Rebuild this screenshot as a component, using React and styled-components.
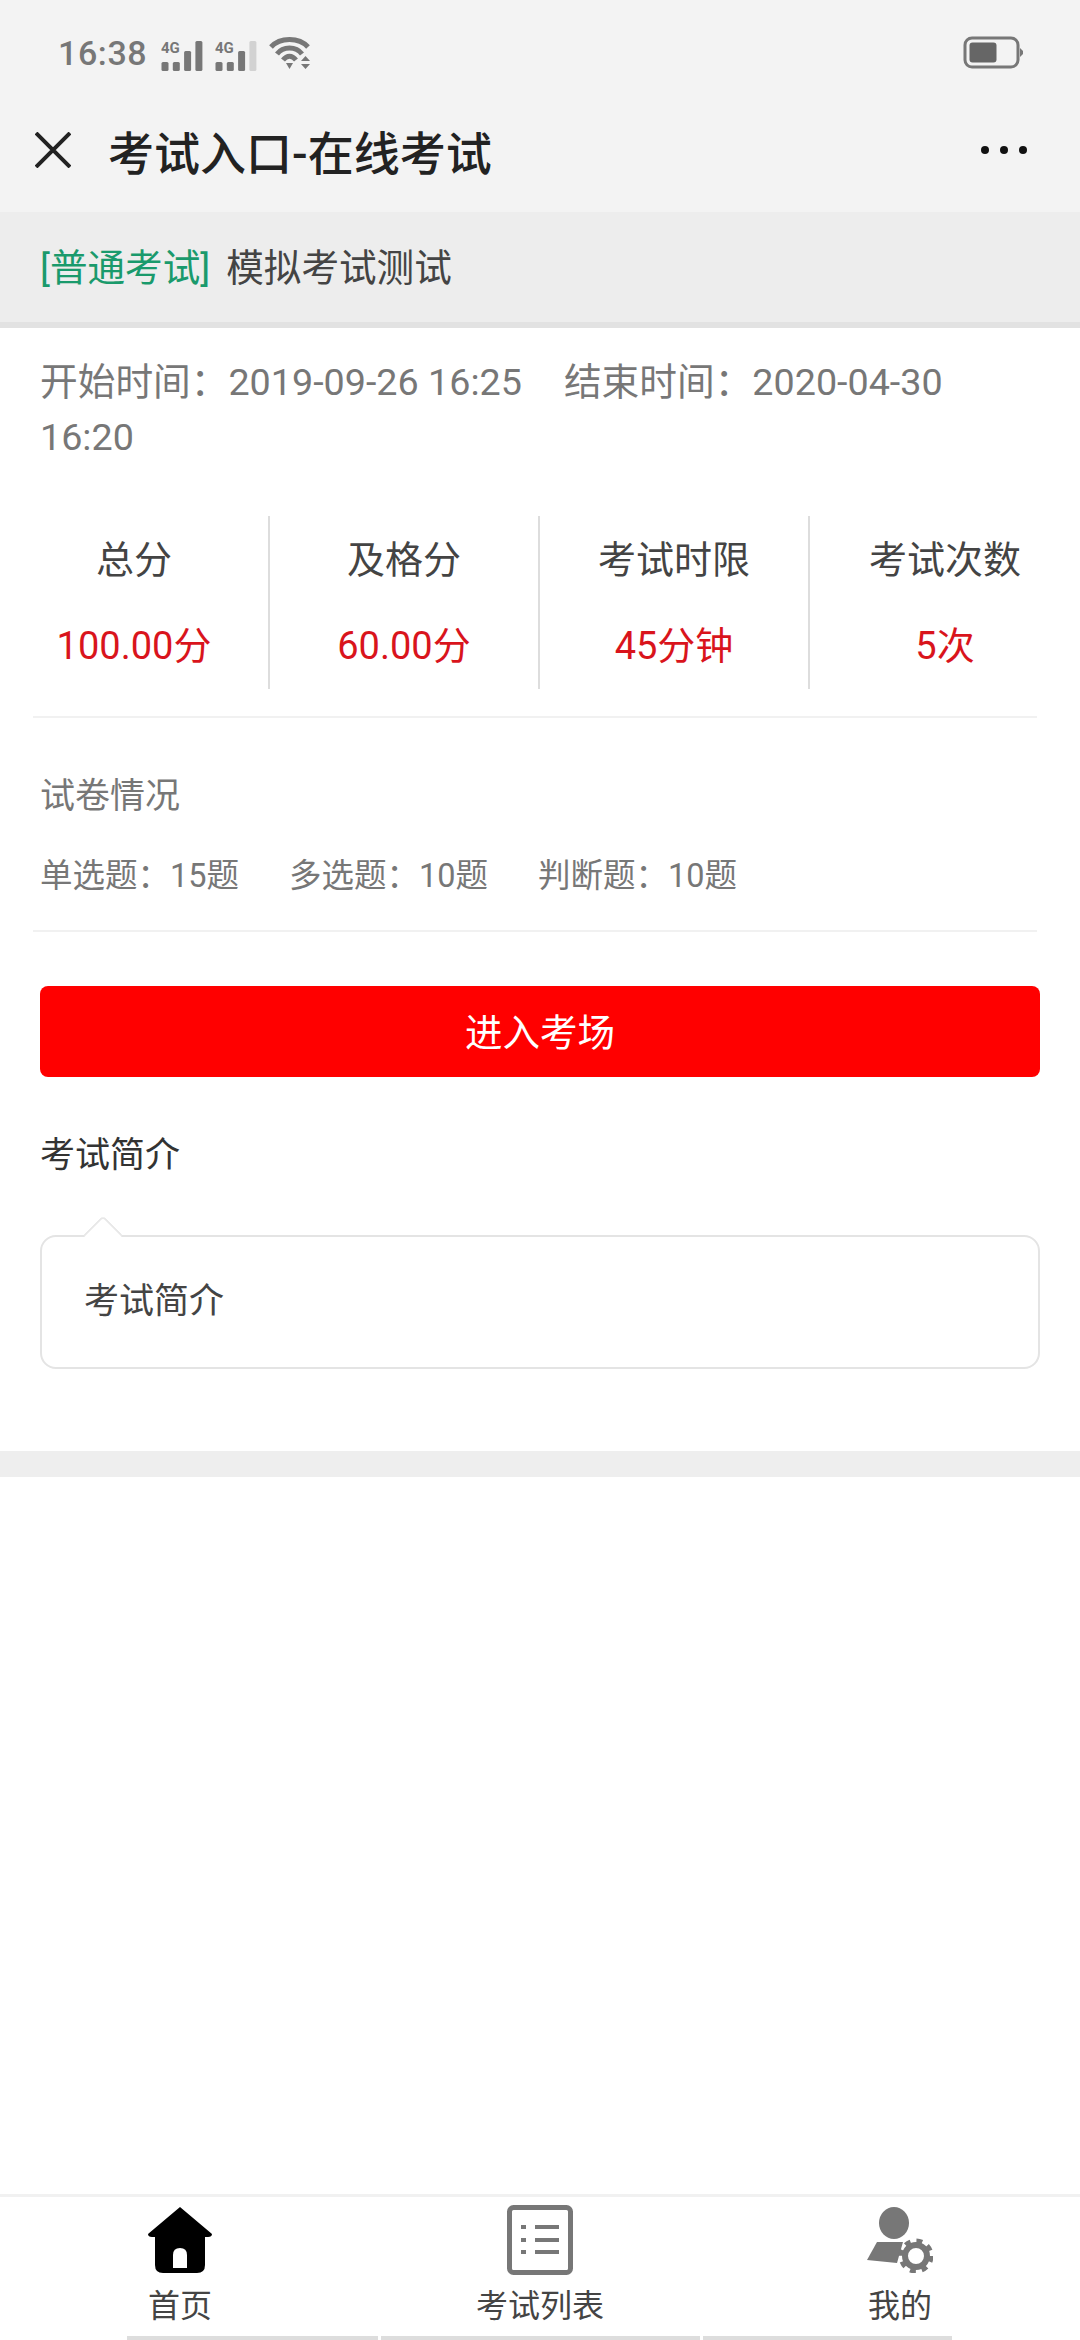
import React from "react";
import styled, { createGlobalStyle } from "styled-components";

const GlobalStyle = createGlobalStyle`
  html, body {
    margin: 0;
    padding: 0;
    background: #fff;
  }
  body {
    font-family: Roboto, "Noto Sans CJK SC", sans-serif;
  }
  * {
    box-sizing: border-box;
  }
`;

const Page = styled.div`
  width: 1080px;
  height: 2340px;
  display: flex;
  flex-direction: column;
  background: #fff;
  overflow: hidden;
`;

const Header = styled.header`
  background: #f3f3f3;
  height: 212px;
`;

const StatusBar = styled.div`
  height: 106px;
  padding: 0 57px 0 58px;
  display: flex;
  align-items: center;
  color: #777;
`;

const Clock = styled.span`
  font-size: 34px;
  font-weight: 500;
  margin-right: 14px;
  letter-spacing: 0.6px;
`;

const StatusIcons = styled.div`
  display: flex;
  align-items: center;
  gap: 12px;
  flex: 1;
`;

const TitleRow = styled.div`
  height: 88px;
  padding: 0 53px 0 35px;
  display: flex;
  align-items: center;
  justify-content: space-between;
`;

const TitleLeft = styled.div`
  display: flex;
  align-items: center;
  gap: 37px;
`;

const Title = styled.h1`
  margin: 0;
  font-size: 46px;
  font-weight: 500;
  color: #222;
`;

const Banner = styled.div`
  height: 116px;
  padding: 0 40px 6px;
  display: flex;
  align-items: center;
  gap: 16px;
  background: #ededed;
  border-bottom: 6px solid #e2e2e2;
  font-size: 37.6px;
  color: #444;
`;

const Tag = styled.span`
  color: #1a9a6c;
`;

const Main = styled.main`
  flex: 1;
`;

const Dates = styled.div`
  padding: 27px 40px 0;
  font-size: 37.7px;
  line-height: 55px;
  color: #777;
  white-space: nowrap;
`;

const DateLine = styled.div``;

const DateGap = styled.span`
  display: inline-block;
  width: 42px;
`;

const Stats = styled.div`
  margin-top: 51px;
  display: grid;
  grid-template-columns: repeat(4, 270px);
`;

const Stat = styled.div`
  height: 173px;
  display: flex;
  flex-direction: column;
  align-items: center;
  justify-content: space-between;
  padding: 19px 0 18px;
  border-right: ${(p) => (p.$last ? "none" : "2px solid #ddd")};
`;

const StatLabel = styled.span`
  font-size: 38px;
  line-height: 50px;
  color: #444;
`;

const StatValue = styled.span`
  font-size: 38px;
  line-height: 50px;
  color: #d9141c;
`;

const Rule = styled.div`
  height: 2px;
  margin: ${(p) => p.$top}px 43px 0 33px;
  background: #f1f1f1;
`;

const Papers = styled.section`
  margin: 0 40px;
  padding-top: 51px;
`;

const PapersTitle = styled.div`
  font-size: 35px;
  line-height: 56px;
  color: #777;
`;

const PaperRow = styled.div`
  margin-top: 23px;
  display: flex;
  gap: 50px;
  font-size: 32.5px;
  line-height: 56px;
  color: #777;
`;

const EnterButton = styled.button`
  display: block;
  width: 1000px;
  height: 91px;
  margin: 54px 0 0 40px;
  padding: 0 0 4px;
  border: none;
  border-radius: 8px;
  background: #ff0000;
  color: #fff;
  font-family: inherit;
  font-size: 37.5px;
`;

const IntroTitle = styled.h2`
  margin: 51px 40px 0;
  font-size: 35px;
  font-weight: 400;
  line-height: 56px;
  color: #333;
`;

const IntroBox = styled.div`
  position: relative;
  height: 134px;
  margin: 51px 40px 0;
  padding: 0 42px 10px;
  display: flex;
  align-items: center;
  border: 2px solid #e4e4e4;
  border-radius: 16px;
  font-size: 35px;
  color: #444;
`;

const IntroArrow = styled.span`
  position: absolute;
  top: -16px;
  left: 47px;
  width: 28px;
  height: 28px;
  background: #fff;
  border-top: 2px solid #e8e8e8;
  border-left: 2px solid #e8e8e8;
  border-top-left-radius: 5px;
  transform: rotate(45deg);
`;

const GrayBand = styled.div`
  height: 26px;
  margin-top: 82px;
  background: #eee;
`;

const TabBar = styled.nav`
  height: 142px;
  display: grid;
  grid-template-columns: repeat(3, 1fr);
  border-top: 3px solid #f1f1f1;
`;

const Tab = styled.div`
  display: flex;
  flex-direction: column;
  align-items: center;
  padding-top: 8px;
`;

const IconSlot = styled.div`
  height: 70px;
  display: flex;
  align-items: center;
`;

const TabLabel = styled.span`
  margin-top: 8px;
  font-size: 32px;
  line-height: 46px;
  color: #444;
`;

const NavIndicators = styled.div`
  height: 4px;
  padding-left: 127px;
  display: flex;
  gap: 3px;
`;

const Indicator = styled.span`
  width: ${(p) => p.$w}px;
  background: #ddd;
`;

// 4G 信号图标，bars 为亮起的格数
function SignalIcon({ bars }) {
  const heights = [9, 9, 20, 30];
  return (
    <svg width="42" height="36" viewBox="0 -6 42 36">
      <text x="0" y="12" fontSize="15" fontWeight="700" fontFamily="Roboto, sans-serif" fill="#777">
        4G
      </text>
      {heights.map((h, i) => (
        <rect
          key={i}
          x={0.5 + i * 11.3}
          y={30 - h}
          width="7"
          height={h}
          rx="1.5"
          fill={i < bars ? "#777" : "#d2d2d2"}
        />
      ))}
    </svg>
  );
}

function WifiIcon() {
  return (
    <svg width="42" height="34" viewBox="0 0 42 34" fill="none" stroke="#777" strokeWidth="5">
      <path d="M2 11 C11 1 30 1 39 11" />
      <path d="M8 18 C14 10 27 10 33 18" />
      <path d="M14 24 C18 19 23 19 27 24" />
      <path d="M17 27 L24 27 L20.5 33 Z" fill="#777" stroke="none" />
      <path d="M32 25 L36.5 20 L41 25 Z M32 28 L41 28 L36.5 33 Z" fill="#777" stroke="none" />
    </svg>
  );
}

function BatteryIcon() {
  return (
    <svg width="60" height="34" viewBox="0 0 60 34">
      <rect x="2" y="2" width="53" height="29" rx="7" fill="none" stroke="#777" strokeWidth="3" />
      <rect x="6.5" y="6.5" width="27" height="20" rx="3" fill="#666" />
      <path d="M57 12 L60 15 L60 18 L57 21 Z" fill="#777" />
    </svg>
  );
}

function CloseIcon() {
  return (
    <svg width="36" height="36" viewBox="0 0 36 36" stroke="#222" strokeWidth="4">
      <path d="M1 1 L35 35 M35 1 L1 35" />
    </svg>
  );
}

function MoreIcon() {
  return (
    <svg width="46" height="10" viewBox="0 0 46 10" fill="#111">
      <circle cx="4" cy="5" r="4" />
      <circle cx="23" cy="5" r="4" />
      <circle cx="42" cy="5" r="4" />
    </svg>
  );
}

function HomeIcon() {
  return (
    <svg width="64" height="66" viewBox="0 0 64 66">
      <path
        fillRule="evenodd"
        fill="#000"
        d="M32 0 L64 27 Q64 30 60 30 L57 30 L57 58 Q57 66 49 66 L15 66 Q7 66 7 58 L7 30 L4 30 Q0 30 0 27 Z M25 61 L39 61 L39 48 Q39 41 32 41 Q25 41 25 48 Z"
      />
    </svg>
  );
}

function ListIcon() {
  return (
    <svg width="66" height="70" viewBox="0 0 66 70" fill="none" stroke="#777">
      <rect x="2.5" y="2.5" width="61" height="65" rx="4" strokeWidth="5" />
      <path d="M28 22 H52 M28 35 H52 M28 47 H52" strokeWidth="4" />
      <path d="M14 22 H19 M14 35 H19 M14 47 H19" strokeWidth="4" />
    </svg>
  );
}

function UserGearIcon() {
  return (
    <svg width="66" height="66" viewBox="0 0 66 66" fill="#777">
      <ellipse cx="27" cy="16" rx="15" ry="16" />
      <path d="M10 35 L36 35 L30 56 L0 53 Z" />
      <circle cx="49" cy="49" r="11" fill="none" stroke="#777" strokeWidth="6" />
      <circle cx="49" cy="49" r="15" fill="none" stroke="#777" strokeWidth="5" strokeDasharray="5.8 5.98" />
    </svg>
  );
}

const stats = [
  { label: "总分", value: "100.00分" },
  { label: "及格分", value: "60.00分" },
  { label: "考试时限", value: "45分钟" },
  { label: "考试次数", value: "5次" },
];

const tabs = [
  { label: "首页", icon: <HomeIcon /> },
  { label: "考试列表", icon: <ListIcon /> },
  { label: "我的", icon: <UserGearIcon /> },
];

export default function App() {
  return (
    <Page>
      <GlobalStyle />
      <Header>
        <StatusBar>
          <Clock>16:38</Clock>
          <StatusIcons>
            <SignalIcon bars={4} />
            <SignalIcon bars={3} />
            <WifiIcon />
          </StatusIcons>
          <BatteryIcon />
        </StatusBar>
        <TitleRow>
          <TitleLeft>
            <CloseIcon />
            <Title>考试入口-在线考试</Title>
          </TitleLeft>
          <MoreIcon />
        </TitleRow>
      </Header>
      <Banner>
        <Tag>[普通考试]</Tag>
        <span>模拟考试测试</span>
      </Banner>
      <Main>
        <Dates>
          <DateLine>
            开始时间：2019-09-26 16:25
            <DateGap />
            结束时间：2020-04-30
          </DateLine>
          <DateLine>16:20</DateLine>
        </Dates>
        <Stats>
          {stats.map((s, i) => (
            <Stat key={s.label} $last={i === stats.length - 1}>
              <StatLabel>{s.label}</StatLabel>
              <StatValue>{s.value}</StatValue>
            </Stat>
          ))}
        </Stats>
        <Rule $top={27} />
        <Papers>
          <PapersTitle>试卷情况</PapersTitle>
          <PaperRow>
            <span>单选题：15题</span>
            <span>多选题：10题</span>
            <span>判断题：10题</span>
          </PaperRow>
        </Papers>
        <Rule $top={26} />
        <EnterButton>进入考场</EnterButton>
        <IntroTitle>考试简介</IntroTitle>
        <IntroBox>
          <IntroArrow />
          考试简介
        </IntroBox>
        <GrayBand />
      </Main>
      <TabBar>
        {tabs.map((t) => (
          <Tab key={t.label}>
            <IconSlot>{t.icon}</IconSlot>
            <TabLabel>{t.label}</TabLabel>
          </Tab>
        ))}
      </TabBar>
      <NavIndicators>
        <Indicator $w={251} />
        <Indicator $w={319} />
        <Indicator $w={249} />
      </NavIndicators>
    </Page>
  );
}
